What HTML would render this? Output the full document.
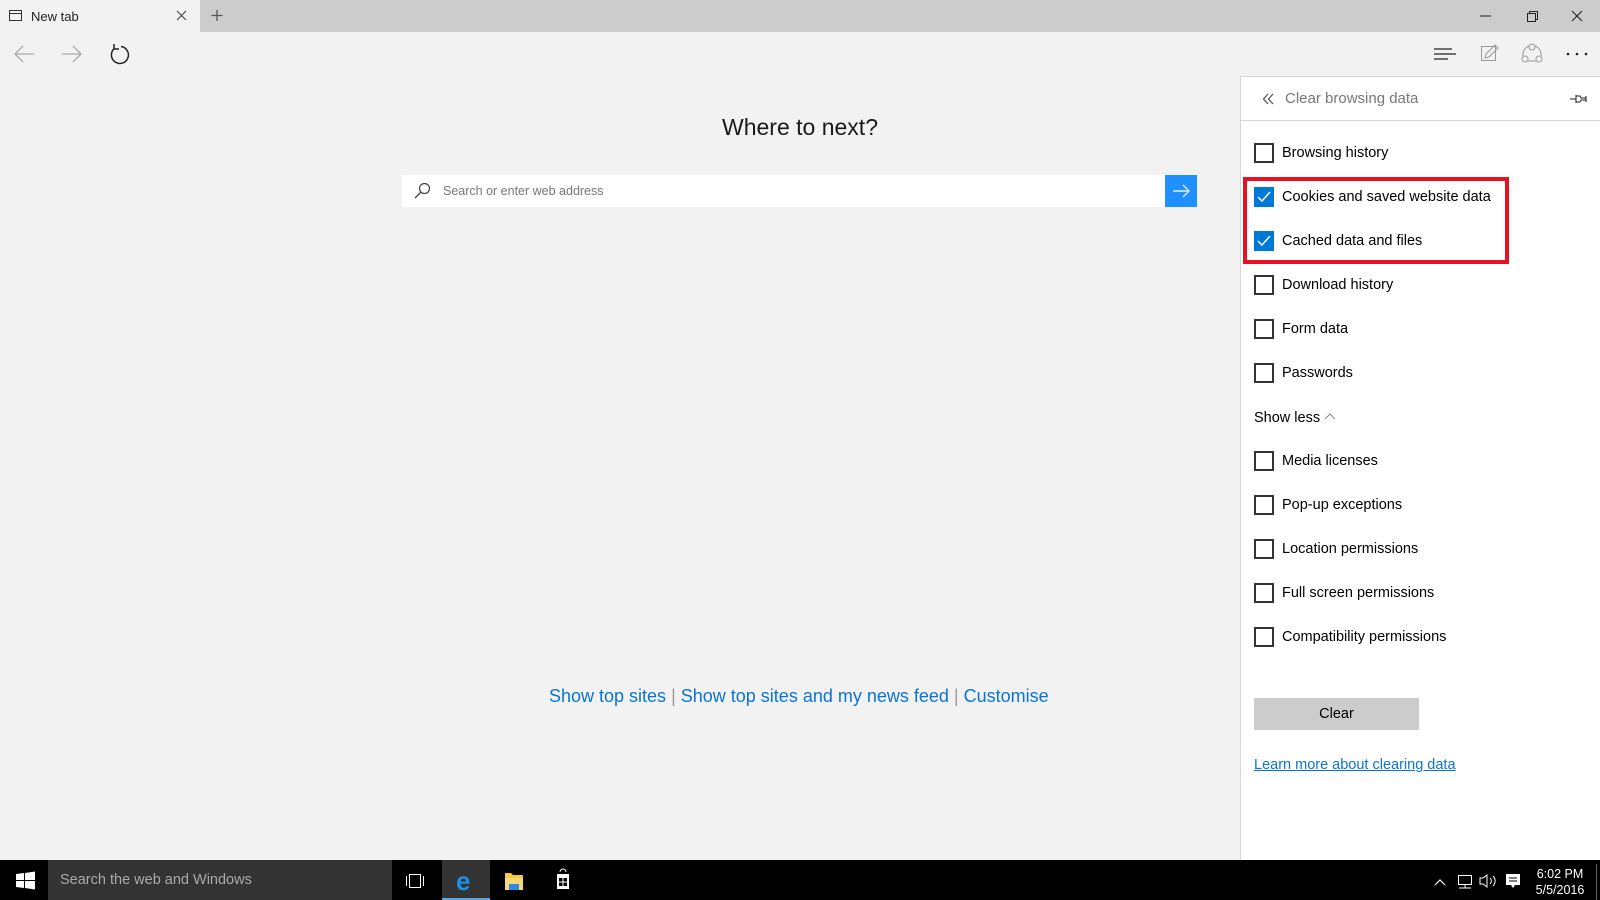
<!DOCTYPE html>
<html><head><style>
*{margin:0;padding:0;box-sizing:border-box}
body{width:1600px;height:900px;overflow:hidden;background:#f2f2f2;font-family:"Liberation Sans",sans-serif;position:relative;color:#000}
.abs{position:absolute}
.tabbar{left:0;top:0;width:1600px;height:32px;background:#cccccc}
.tab{left:0;top:0;width:200px;height:32px;background:#f2f2f2}
.panel{left:1240px;top:76px;width:360px;height:784px;background:#fff;border-left:1px solid #d6d6d6;border-top:1px solid #d6d6d6}
.row{position:absolute;left:13px;font-size:14.5px;color:#000;height:20px;line-height:20px}
.cb{position:absolute;left:0;top:0;width:20px;height:20px;border:2px solid #333;background:#fff}
.cb.on{background:#0078d7;border-color:#0078d7}
.row span{position:absolute;left:28px;white-space:nowrap}
</style></head><body>
<div class="abs tabbar"></div>
<div class="abs tab"></div>
<div class="abs" style="left:31px;top:9px;font-size:13px;color:#222">New tab</div>
<svg class="abs" style="left:0;top:0" width="1600" height="76">
<rect x="9.5" y="10.5" width="12" height="10" fill="none" stroke="#333"/><line x1="9.5" y1="13.5" x2="21.5" y2="13.5" stroke="#333"/>
<path d="M177 11l9 9M186 11l-9 9" stroke="#444" stroke-width="1.1"/>
<path d="M217 10v11M211.5 15.5h11" stroke="#555" stroke-width="1.3"/>
<path d="M1480 16h11" stroke="#222"/>
<rect x="1527.5" y="13.5" width="8" height="8" fill="none" stroke="#222"/><path d="M1529.5 13.5v-2h8v8h-2" fill="none" stroke="#222"/>
<path d="M1572 11l10 10M1582 11l-10 10" stroke="#222" stroke-width="1.1"/>
<path d="M34 54H15M23 46l-8 8 8 8" fill="none" stroke="#aaa" stroke-width="1.3"/>
<path d="M62 54h19M73 46l8 8-8 8" fill="none" stroke="#aaa" stroke-width="1.3"/>
<path d="M115 48a8.5 8.5 0 1 0 6 -1.5M114 44v5h5" fill="none" stroke="#222" stroke-width="1.5"/>
<path d="M1434 49h18M1434 54h22M1434 59h14" stroke="#222" stroke-width="1.3"/>
<rect x="1481.5" y="46.5" width="14" height="14" fill="none" stroke="#999"/><path d="M1485 58l1-4 9-9 3 3-9 9z" fill="none" stroke="#999"/>
<circle cx="1532" cy="47" r="3" fill="none" stroke="#999"/><circle cx="1525" cy="59" r="3" fill="none" stroke="#999"/><circle cx="1539" cy="59" r="3" fill="none" stroke="#999"/><path d="M1529 46a9 9 0 0 0 -6 10M1535 46a9 9 0 0 1 6 10M1528 61h8" fill="none" stroke="#999"/>
<circle cx="1568" cy="54" r="1.3" fill="#222"/><circle cx="1577" cy="54" r="1.3" fill="#222"/><circle cx="1586" cy="54" r="1.3" fill="#222"/>
</svg>
<div class="abs" style="left:0;top:114px;width:1600px;text-align:center;font-size:23px;color:#1a1a1a">Where to next?</div>
<div class="abs" style="left:402px;top:175px;width:763px;height:32px;background:#fff"></div>
<svg class="abs" style="left:413px;top:181px" width="20" height="20"><circle cx="11.5" cy="7.5" r="5" fill="none" stroke="#444" stroke-width="1.2"/><path d="M8 11l-6 6" stroke="#444" stroke-width="1.3"/></svg>
<div class="abs" style="left:443px;top:184px;font-size:12.5px;color:#777">Search or enter web address</div>
<div class="abs" style="left:1165px;top:175px;width:32px;height:32px;background:#1e90ff"></div>
<svg class="abs" style="left:1165px;top:175px" width="32" height="32"><path d="M8 16h16M18 10l6 6-6 6" fill="none" stroke="#dfefff" stroke-width="1.4"/></svg>
<div class="abs" style="left:549px;top:686px;font-size:18px;color:#0a74d6;white-space:nowrap">Show top sites <span style="color:#999">|</span> Show top sites and my news feed <span style="color:#999">|</span> Customise</div>
<div class="abs panel">
 <div class="abs" style="left:0;top:43px;width:360px;height:1px;background:#d6d6d6"></div>
 <svg class="abs" style="left:20px;top:14px" width="16" height="16"><path d="M7 3l-4.5 5 4.5 5M12 3l-4.5 5 4.5 5" fill="none" stroke="#444" stroke-width="1.1"/></svg>
 <div class="abs" style="left:44px;top:13px;font-size:15px;color:#777">Clear browsing data</div>
 <svg class="abs" style="left:328px;top:14px" width="20" height="16"><path d="M1 8h6M7 4v8M7 5h4l1 2h5M7 11h4l1-2h5M17 5v6" fill="none" stroke="#222"/></svg>
 <div class="abs" style="left:2px;top:100px;width:266px;height:87px;border:4px solid #e81123"></div>
 <div class="row" style="top:66px"><div class="cb"></div><span>Browsing history</span></div>
 <div class="row" style="top:110px"><div class="cb on"><svg width="16" height="16" style="position:absolute;left:0;top:0"><path d="M2 8l4 4 8-9" fill="none" stroke="#fff" stroke-width="1.5"/></svg></div><span>Cookies and saved website data</span></div>
 <div class="row" style="top:154px"><div class="cb on"><svg width="16" height="16" style="position:absolute;left:0;top:0"><path d="M2 8l4 4 8-9" fill="none" stroke="#fff" stroke-width="1.5"/></svg></div><span>Cached data and files</span></div>
 <div class="row" style="top:198px"><div class="cb"></div><span>Download history</span></div>
 <div class="row" style="top:242px"><div class="cb"></div><span>Form data</span></div>
 <div class="row" style="top:286px"><div class="cb"></div><span>Passwords</span></div>
 <div class="row" style="top:331px;left:13px"><span style="left:0">Show less <svg width="12" height="10"><path d="M1 7l5-5 5 5" fill="none" stroke="#888"/></svg></span></div>
 <div class="row" style="top:374px"><div class="cb"></div><span>Media licenses</span></div>
 <div class="row" style="top:418px"><div class="cb"></div><span>Pop-up exceptions</span></div>
 <div class="row" style="top:462px"><div class="cb"></div><span>Location permissions</span></div>
 <div class="row" style="top:506px"><div class="cb"></div><span>Full screen permissions</span></div>
 <div class="row" style="top:550px"><div class="cb"></div><span>Compatibility permissions</span></div>
 <div class="abs" style="left:13px;top:621px;width:165px;height:32px;background:#cccccc;text-align:center;line-height:32px;font-size:14.5px">Clear</div>
 <div class="abs" style="left:13px;top:680px;font-size:14.5px;color:#0a74d6;text-decoration:underline">Learn more about clearing data</div>
</div>
<div class="abs" style="left:0;top:860px;width:1600px;height:40px;background:#000"></div>
<div class="abs" style="left:48px;top:860px;width:344px;height:40px;background:#333"></div>
<div class="abs" style="left:60px;top:872px;font-size:14.5px;color:#aaa">Search the web and Windows</div>
<div class="abs" style="left:442px;top:860px;width:48px;height:40px;background:#333;border-bottom:2px solid #5ca9ea"></div>
<svg class="abs" style="left:0;top:860px" width="1600" height="40">
<path d="M16 14l8-1v7h-8zM25 13l10-1.5V20H25zM16 21h8v7l-8-1zM25 21h10v8.5L25 28z" fill="#fff"/>
<rect x="409.5" y="14.5" width="11" height="13" fill="none" stroke="#fff"/><path d="M406.5 16v10M423.5 16v10" stroke="#fff"/>
<text x="456" y="30" font-size="26" font-weight="bold" fill="#1e8fe6" font-family="Liberation Sans">e</text>
<path d="M505 13h6l2 2h10v15h-18z" fill="#f6c646"/><rect x="505" y="18" width="18" height="12" fill="#f8d775"/><rect x="509" y="24" width="10" height="6" fill="#2a8be0"/>
<path d="M560 12a3 3 0 0 1 6 0" fill="none" stroke="#fff"/><rect x="557" y="14" width="12" height="15" fill="#fff"/><path d="M559 18h3.5v3.5h-3.5zM563.5 18h3.5v3.5h-3.5zM559 22.5h3.5v3.5h-3.5zM563.5 22.5h3.5v3.5h-3.5z" fill="#000"/>
<path d="M1435 25l5-5 5 5" fill="none" stroke="#fff" stroke-width="1.2"/>
<rect x="1458.5" y="15.5" width="13" height="9" fill="none" stroke="#fff"/><path d="M1465 25v3h-6h12" fill="none" stroke="#fff"/>
<path d="M1480 18h3l4-3v12l-4-3h-3z" fill="none" stroke="#fff"/><path d="M1490 18a4 4 0 0 1 0 6M1493 16a7 7 0 0 1 0 10" fill="none" stroke="#fff"/>
<path d="M1506 14h14v11h-5l-2 3-2-3h-5z" fill="#fff"/><path d="M1509 18h8M1509 21h8" stroke="#000"/>
<text x="1560" y="18" font-size="12.5" fill="#fff" text-anchor="middle" font-family="Liberation Sans">6:02 PM</text>
<text x="1560" y="34" font-size="12.5" fill="#fff" text-anchor="middle" font-family="Liberation Sans">5/5/2016</text>
<rect x="1596" y="4" width="1" height="36" fill="#666"/>
</svg>
</body></html>
